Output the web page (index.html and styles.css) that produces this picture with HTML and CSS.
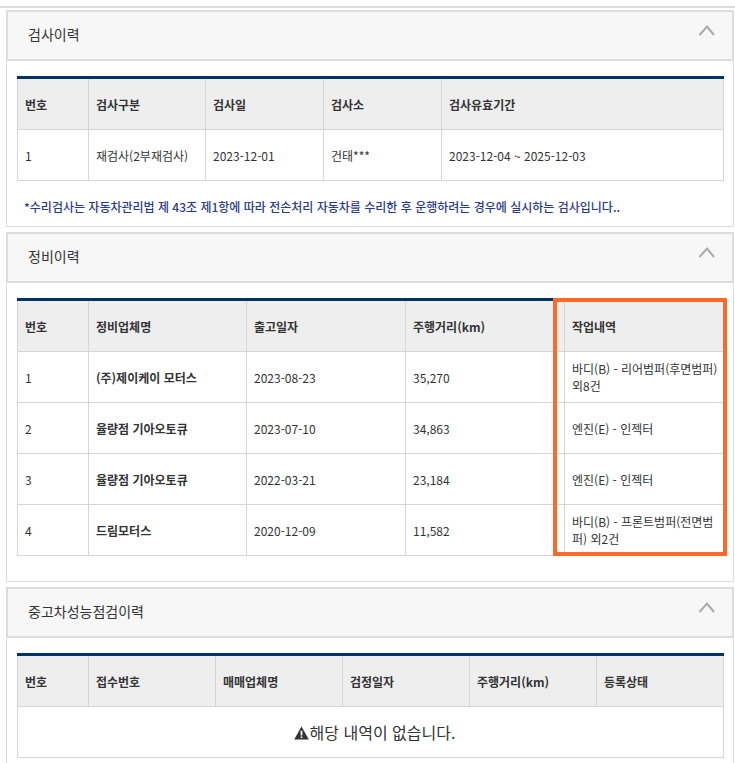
FILE: index.html
```html
<!DOCTYPE html>
<html lang="ko">
<head>
<meta charset="utf-8">
<title>이력 조회</title>
<link rel="stylesheet" href="styles.css">
</head>
<body>
<div class="page">
  <section class="panel panel-first">
    <header class="panel-head">
      <h2>검사이력</h2>
      <svg class="chevron" viewBox="0 0 18 12" width="18" height="12"><path d="M1.500 11 9 2.500 16 11"/></svg>
    </header>
    <div class="panel-body">
      <table class="grid grid-a">
        <colgroup><col class="a1"><col class="a2"><col class="a3"><col class="a4"><col class="a5"></colgroup>
        <thead><tr><th>번호</th><th>검사구분</th><th>검사일</th><th>검사소</th><th>검사유효기간</th></tr></thead>
        <tbody><tr><td>1</td><td>재검사(2부재검사)</td><td>2023-12-01</td><td>건태***</td><td>2023-12-04 ~ 2025-12-03</td></tr></tbody>
      </table>
      <p class="note">*수리검사는 자동차관리법 제 43조 제1항에 따라 전손처리 자동차를 수리한 후 운행하려는 경우에 실시하는 검사입니다..</p>
    </div>
  </section>

  <section class="panel">
    <header class="panel-head">
      <h2>정비이력</h2>
      <svg class="chevron" viewBox="0 0 18 12" width="18" height="12"><path d="M1.500 11 9 2.500 16 11"/></svg>
    </header>
    <div class="panel-body panel-body-marked">
      <table class="grid grid-b">
        <colgroup><col class="b1"><col class="b2"><col class="b3"><col class="b4"><col class="b5"></colgroup>
        <thead><tr><th>번호</th><th>정비업체명</th><th>출고일자</th><th>주행거리(km)</th><th>작업내역</th></tr></thead>
        <tbody>
          <tr><td>1</td><td class="strong">(주)제이케이 모터스</td><td>2023-08-23</td><td>35,270</td><td>바디(B) - 리어범퍼(후면범퍼) 외8건</td></tr>
          <tr><td>2</td><td class="strong">율량점 기아오토큐</td><td>2023-07-10</td><td>34,863</td><td>엔진(E) - 인젝터</td></tr>
          <tr><td>3</td><td class="strong">율량점 기아오토큐</td><td>2022-03-21</td><td>23,184</td><td>엔진(E) - 인젝터</td></tr>
          <tr><td>4</td><td class="strong">드림모터스</td><td>2020-12-09</td><td>11,582</td><td>바디(B) - 프론트범퍼(전면범퍼) 외2건</td></tr>
        </tbody>
      </table>
      <div class="marker"></div>
    </div>
  </section>

  <section class="panel">
    <header class="panel-head">
      <h2>중고차성능점검이력</h2>
      <svg class="chevron" viewBox="0 0 18 12" width="18" height="12"><path d="M1.500 11 9 2.500 16 11"/></svg>
    </header>
    <div class="panel-body">
      <table class="grid grid-c">
        <colgroup><col class="c1"><col class="c2"><col class="c3"><col class="c4"><col class="c5"><col class="c6"></colgroup>
        <thead><tr><th>번호</th><th>접수번호</th><th>매매업체명</th><th>검정일자</th><th>주행거리(km)</th><th>등록상태</th></tr></thead>
        <tbody><tr><td class="empty" colspan="6"><svg class="warn" viewBox="0 0 14 13" width="15" height="14"><path fill-rule="evenodd" d="M7 .5 13.800 12.500H.2ZM6.200 4.500V8.800H7.800V4.500ZM6.200 9.700V11.200H7.800V9.700Z"/></svg>해당 내역이 없습니다.</td></tr></tbody>
      </table>
    </div>
  </section>
</div>
</body>
</html>
```

FILE: styles.css
```css
html { overflow: hidden; }
body {
  margin: 0;
  background: #fff;
  color: #333;
  font-family: "Noto Sans CJK KR", "Noto Sans", sans-serif;
  font-size: 12px;
}
.page {
  border-top: 2px solid #ddd;
  margin-top: 6px;
  padding: 2px 1px 0 6px;
}
.panel {
  border: 1px solid #ddd;
  border-top: 0;
  margin-bottom: 5px;
}
.panel-head {
  height: 47px;
  border: 2px solid #ddd;
  margin: 0 -1px;
  background: #f7f7f7;
  display: flex;
  align-items: center;
  justify-content: space-between;
  padding: 0 16px 0 20px;
}
.panel-head h2 {
  margin: 0;
  font-size: 14px;
  font-weight: 400;
  color: #333;
  position: relative;
  top: -2px;
}
.chevron {
  align-self: flex-start;
  margin-top: 12px;
  fill: none;
  stroke: #aaa;
  stroke-width: 2;
}
.panel-body {
  padding: 15px 10px 0;
}
.panel-body-marked {
  position: relative;
  padding-bottom: 25px;
}
.panel:last-child .panel-body { padding-bottom: 25px; }
.grid {
  width: 706px;
  table-layout: fixed;
  border-collapse: collapse;
  border-top: 3px solid #036;
}
.grid th, .grid td {
  border: 1px solid #d5d5d5;
  padding: 0 5px 0 7px;
  text-align: left;
  vertical-align: middle;
  font-size: 12px;
  line-height: 17px;
}
.grid thead tr { height: 52px; }
.grid tbody tr { height: 51px; }
.grid th {
  background: #eee;
  font-weight: 700;
  color: #333;
  border-top: 0;
}
.grid .strong { font-weight: 700; }
.grid .empty {
  text-align: center;
  font-size: 16px;
  padding-left: 13px;
}
.warn { fill: #333; vertical-align: -1px; margin-right: 1px; }
.note {
  margin: 0;
  padding: 18px 0 11px 7px;
  color: #2a3a8c;
  font-weight: 500;
  line-height: 16px;
  white-space: nowrap;
}
.a1 { width: 71px; } .a2 { width: 117px; } .a3 { width: 118px; } .a4 { width: 118px; } .a5 { width: 282px; }
.b1 { width: 71px; } .b2 { width: 158px; } .b3 { width: 159px; } .b4 { width: 159px; } .b5 { width: 159px; }
.c1 { width: 71px; } .c2 { width: 127px; } .c3 { width: 127px; } .c4 { width: 127px; } .c5 { width: 127px; } .c6 { width: 127px; }
.marker {
  position: absolute;
  left: 546px;
  top: 15px;
  width: 166px;
  height: 250px;
  border: 4px solid #fb6a29;
  pointer-events: none;
}
```
